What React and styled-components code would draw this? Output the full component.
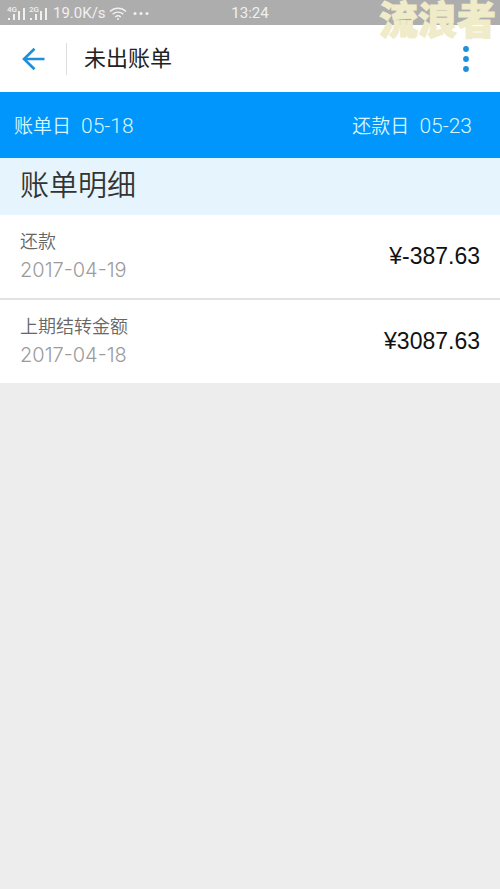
import React from 'react';
import styled, { createGlobalStyle } from 'styled-components';

const GlobalStyle = createGlobalStyle`
    * {
        box-sizing: border-box;
    }
    body {
        margin: 0;
        background-color: #ededed;
        font-family: Roboto, "Noto Sans CJK SC", sans-serif;
        font-weight: 350;
    }
`;

const Page = styled.div`
    position: relative;
`;

const StatusBar = styled.div`
    display: grid;
    grid-template-columns: 1fr auto 1fr;
    align-items: center;
    height: 25px;
    padding: 0 7px;
    background-color: #adadad;
    color: #f0f0f0;
    font-size: 15px;
    font-weight: 400;
    line-height: 26px;
`;

const StatusGroup = styled.div`
    display: flex;
    align-items: center;
    gap: 3px;
`;

const Speed = styled.span`
    margin-left: 2px;
`;

const Watermark = styled.div`
    position: absolute;
    top: 0;
    right: 4px;
    color: #f0ebc8;
    font-family: "Noto Sans CJK SC", sans-serif;
    font-size: 39px;
    font-weight: 900;
    line-height: 34px;
    -webkit-text-stroke: 1px #f0ebc8;
    pointer-events: none;
`;

const Header = styled.header`
    display: flex;
    align-items: center;
    height: 67px;
    padding: 0 20px;
    background-color: #fff;
`;

const IconButton = styled.button`
    display: flex;
    padding: 0;
    border: none;
    background: none;
    color: #1e8fd8;
    cursor: pointer;
`;

const Divider = styled.span`
    width: 1px;
    height: 32px;
    margin: 0 17px 0 19px;
    background-color: #dedede;
`;

const Title = styled.h1`
    flex: 1;
    margin: 0;
    color: #222;
    font-size: 22px;
    font-weight: 400;
    line-height: 32px;
`;

const DateBar = styled.div`
    display: flex;
    justify-content: space-between;
    height: 66px;
    padding: 0 28px 0 14px;
    background-color: #0096fb;
    color: #d8f6ff;
    line-height: 68px;
`;

const DateItem = styled.div`
    display: flex;
    align-items: baseline;
    gap: 10px;
    font-size: 19px;
`;

const DateValue = styled.span`
    font-size: 21px;
`;

const SectionTitle = styled.h2`
    height: 57px;
    margin: 0;
    padding: 0 20px;
    background-color: #e6f5fd;
    color: #333;
    font-size: 29px;
    font-weight: 350;
    line-height: 56px;
`;

const List = styled.ul`
    margin: 0;
    padding: 0;
    list-style: none;
`;

const Row = styled.li`
    display: flex;
    justify-content: space-between;
    align-items: center;
    padding: 12px 20px 14px;
    background-color: #fff;

    & + & {
        border-top: 2px solid #e2e2e2;
    }
`;

const RowName = styled.div`
    color: #666;
    font-size: 18px;
    line-height: 29px;
`;

const RowDate = styled.div`
    color: #9c9c9c;
    font-family: Inter, sans-serif;
    font-size: 20px;
    font-weight: 300;
    line-height: 28px;
`;

const Amount = styled.div`
    color: #111;
    font-family: "Liberation Sans", sans-serif;
    font-size: 23px;
    line-height: 28px;
`;

const dates = [
    { label: '账单日', value: '05-18' },
    { label: '还款日', value: '05-23' },
];

const bills = [
    { name: '还款', date: '2017-04-19', amount: '¥-387.63' },
    { name: '上期结转金额', date: '2017-04-18', amount: '¥3087.63' },
];

function Signal({ label }) {
    return (
        <svg width="19" height="17" viewBox="0 0 19 17" fill="#f0f0f0">
            <text x="0" y="7" fontSize="8" fontWeight="500">{label}</text>
            <rect x="1" y="13" width="2" height="2" />
            <rect x="6" y="9" width="2" height="6" />
            <rect x="11" y="6" width="2" height="9" />
            <rect x="16" y="3" width="2" height="12" />
        </svg>
    );
}

function Wifi() {
    return (
        <svg width="18" height="15" viewBox="0 0 18 15" fill="none" stroke="#f0f0f0" strokeWidth="1.4">
            <path d="M1 5.5a11.5 11.5 0 0 1 16 0M3.6 8.3a7.8 7.8 0 0 1 10.8 0M6.2 11a4.2 4.2 0 0 1 5.6 0" />
            <circle cx="9" cy="13" r="1" fill="#f0f0f0" stroke="none" />
        </svg>
    );
}

function App() {
    return (
        <Page>
            <GlobalStyle />
            <StatusBar>
                <StatusGroup>
                    <Signal label="4G" />
                    <Signal label="2G" />
                    <Speed>19.0K/s</Speed>
                    <Wifi />
                    <svg width="24" height="3" viewBox="0 0 24 3" fill="#f0f0f0">
                        <circle cx="5" cy="1.5" r="1.5" />
                        <circle cx="11" cy="1.5" r="1.5" />
                        <circle cx="17" cy="1.5" r="1.5" />
                    </svg>
                </StatusGroup>
                <span>13:24</span>
            </StatusBar>
            <Header>
                <IconButton aria-label="返回">
                    <svg width="27" height="24" viewBox="0 0 27 24" fill="none" stroke="currentColor" strokeWidth="2.6">
                        <path d="M14.5 1.8 4 12l10.5 10.2M4 12h20.5" />
                    </svg>
                </IconButton>
                <Divider />
                <Title>未出账单</Title>
                <IconButton aria-label="更多">
                    <svg width="28" height="28" viewBox="0 0 28 28" fill="currentColor">
                        <circle cx="14" cy="4" r="2.9" />
                        <circle cx="14" cy="14" r="2.9" />
                        <circle cx="14" cy="24" r="2.9" />
                    </svg>
                </IconButton>
            </Header>
            <DateBar>
                {dates.map((item) => (
                    <DateItem key={item.label}>
                        <span>{item.label}</span>
                        <DateValue>{item.value}</DateValue>
                    </DateItem>
                ))}
            </DateBar>
            <SectionTitle>账单明细</SectionTitle>
            <List>
                {bills.map((bill) => (
                    <Row key={bill.date}>
                        <div>
                            <RowName>{bill.name}</RowName>
                            <RowDate>{bill.date}</RowDate>
                        </div>
                        <Amount>{bill.amount}</Amount>
                    </Row>
                ))}
            </List>
            <Watermark>流浪者</Watermark>
        </Page>
    );
}

export default App;
